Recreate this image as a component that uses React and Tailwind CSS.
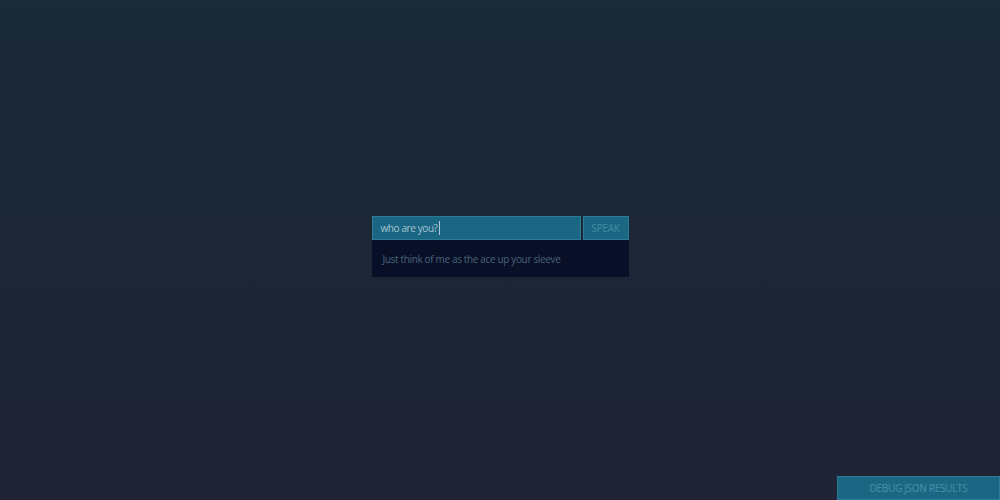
export default function App() {
  return (
    <div className="relative w-[1000px] h-[500px] overflow-hidden bg-gradient-to-b from-[#1a2a38] to-[#1e2335]" style={{ fontFamily: '"Open Sans", "DejaVu Sans", sans-serif' }}>
      <div className="flex justify-center pt-[216px]">
        <div className="w-[257px] flex flex-col">
          <div className="flex gap-[2px]">
            <div className="w-[209px] h-[24px] bg-[#1b6783] border border-[#2a7d98] flex items-center pl-[8px] text-[10px] tracking-[-0.4px] text-[#a3c2d1]">
              who are you?<span className="w-px h-[14px] bg-[#a9c7d5] ml-px"></span>
            </div>
            <div className="w-[46px] h-[24px] bg-[#1b6783] border border-[#2a7d98] flex items-center justify-center text-[10px] tracking-[-0.3px] text-[#3f8aa4]">
              SPEAK
            </div>
          </div>
          <div className="h-[37px] bg-[#0a0f28] flex items-center pl-[11px] pt-[2px] text-[10px] tracking-[-0.35px] text-[#45657a]">
            Just think of me as the ace up your sleeve
          </div>
        </div>
      </div>
      <div className="absolute right-0 bottom-0 w-[163px] h-[24px] bg-[#1b6783] border border-[#2a7d98] flex items-center justify-center text-[10px] tracking-[-0.3px] text-[#4a8fa8]">
        DEBUG JSON RESULTS
      </div>
    </div>
  );
}
